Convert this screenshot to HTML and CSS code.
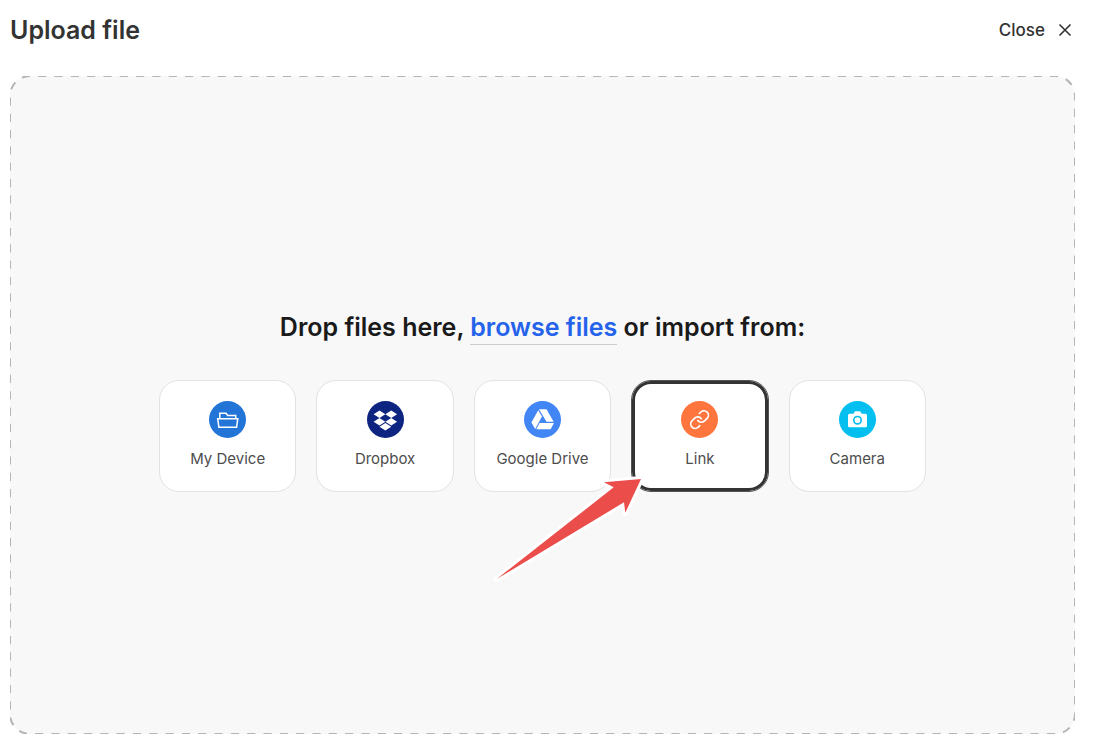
FILE: index.html
```html
<!DOCTYPE html>
<html lang="en">

<head>
    <meta charset="UTF-8">
    <meta name="viewport" content="width=device-width, initial-scale=1.0">
    <title>Upload file</title>
    <link rel="stylesheet" href="styles.css">
</head>

<body>
    <header class="header">
        <h1>Upload file</h1>
        <button type="button" class="close">
            Close
            <svg width="14" height="14" viewBox="0 0 14 14" aria-hidden="true">
                <path d="M1.5 1.5l11 11M12.5 1.5l-11 11" fill="none" stroke="#333" stroke-width="1.6" />
            </svg>
        </button>
    </header>

    <main class="dropzone">
        <svg class="dashes" aria-hidden="true">
            <rect width="100%" height="100%" rx="20" pathLength="3344" />
        </svg>

        <h2>Drop files here, <a href="#" class="browse">browse files</a> or import from:</h2>

        <ul class="sources">
            <li>
                <button type="button" class="source">
                    <svg class="icon" viewBox="0 0 37 37" aria-hidden="true">
                        <circle cx="18.5" cy="18.5" r="18.5" fill="#2275d7" />
                        <path d="M8.7 17.7h20.1l-1.2 8.6H9.9zM10.8 17.5v-5.2h6.2l1.7 2.2h8v3" fill="none" stroke="#fff" stroke-width="1.5" />
                    </svg>
                    My Device
                </button>
            </li>
            <li>
                <button type="button" class="source">
                    <svg class="icon" viewBox="0 0 37 37" aria-hidden="true">
                        <circle cx="18.5" cy="18.5" r="18.5" fill="#0d2481" />
                        <path transform="translate(6.6 7.7) scale(.98)" d="M6 1.8L0 5.6l6 3.8 6-3.8zM18 1.8l-6 3.8 6 3.8 6-3.8zM0 13.3l6 3.8 6-3.8-6-3.8zM18 9.5l-6 3.8 6 3.8 6-3.8zM6 18.4l6 3.8 6-3.8-6-3.8z" fill="#fff" />
                    </svg>
                    Dropbox
                </button>
            </li>
            <li>
                <button type="button" class="source">
                    <svg class="icon" viewBox="0 0 37 37" aria-hidden="true">
                        <circle cx="18.5" cy="18.5" r="18.5" fill="#4285f4" />
                        <path d="M15 8.3h7.5l7.2 12.4h-7.2zM14.2 9.3l3.8 6.3L11.2 28l-3.8-6.4zM15.6 22H30l-3.4 6.2H12.2z" fill="#fff" />
                    </svg>
                    Google Drive
                </button>
            </li>
            <li>
                <button type="button" class="source selected">
                    <svg class="icon" viewBox="0 0 37 37" aria-hidden="true">
                        <circle cx="18.5" cy="18.5" r="18.5" fill="#ff753e" />
                        <path transform="translate(7.9 7.9) scale(.89)" d="M10 13a5 5 0 0 0 7.54.54l3-3a5 5 0 0 0-7.07-7.07l-1.72 1.71M14 11a5 5 0 0 0-7.54-.54l-3 3a5 5 0 0 0 7.07 7.07l1.71-1.71" fill="none" stroke="#fff" stroke-width="1.9" stroke-linecap="round" />
                    </svg>
                    Link
                </button>
                <svg class="arrow" width="156" height="110" viewBox="0 0 156 110" aria-hidden="true">
                    <path d="M148 3L111 6.3l9.7 5L3.7 103 131 26.3l1.3 10.4z" />
                </svg>
            </li>
            <li>
                <button type="button" class="source">
                    <svg class="icon" viewBox="0 0 37 37" aria-hidden="true">
                        <circle cx="18.5" cy="18.5" r="18.5" fill="#03bfef" />
                        <path d="M10.5 12.8h4l1-1.9q.3-.6 1-.6h4.2q.7 0 1 .6l1 1.9h3.8q1.5 0 1.5 1.5v10.5q0 1.5-1.5 1.5h-16Q9 26.3 9 24.8V14.3q0-1.5 1.5-1.5z" fill="#fff" />
                        <circle cx="18.5" cy="19.2" r="3.7" fill="#fff" stroke="#03bfef" stroke-width="1.7" />
                    </svg>
                    Camera
                </button>
            </li>
        </ul>
    </main>
</body>

</html>
```
FILE: styles.css
```css
* {
    margin: 0;
    padding: 0;
    box-sizing: border-box;
}

body {
    display: flex;
    flex-direction: column;
    min-height: 100vh;
    padding: 14px 21px 8px 10px;
    background: #fff;
    color: #333;
    font-family: Inter, "Liberation Sans", sans-serif;
}

button {
    border: 0;
    background: none;
    color: inherit;
    font-family: inherit;
    cursor: pointer;
}

.header {
    display: flex;
    justify-content: space-between;
    align-items: center;
    height: 32px;
    margin-bottom: 30px;
}

.header h1,
.dropzone h2 {
    font-size: 25px;
    font-weight: 600;
    line-height: 32px;
}

.close {
    display: flex;
    align-items: center;
    gap: 13px;
    padding-right: 3px;
    font-size: 17px;
    font-weight: 500;
    line-height: 32px;
}

.dropzone {
    position: relative;
    flex: 1;
    display: flex;
    flex-direction: column;
    justify-content: center;
    align-items: center;
    padding: 20px 20px 27px;
    border-radius: 20px;
    background: #f8f8f8;
}

/* long dashes, the css dashed border is too short */
/* the outer half of the stroke is clipped by the svg */
.dashes {
    position: absolute;
    inset: 0;
    width: 100%;
    height: 100%;
    pointer-events: none;
}

.dashes rect {
    fill: none;
    stroke: #b5b5b5;
    stroke-width: 2;
    stroke-dasharray: 8;
    stroke-dashoffset: 8;
}

.dropzone h2 {
    margin-bottom: 37px;
    color: #1a1a1a;
    text-align: center;
}

.browse {
    padding-bottom: 2px;
    border-bottom: 1px solid #ccc;
    color: #2563eb;
    text-decoration: none;
}

.sources {
    display: grid;
    grid-template-columns: repeat(5, 1fr);
    gap: 20px;
    width: 100%;
    max-width: 767px;
    list-style: none;
}

.sources li {
    position: relative;
}

.source {
    display: flex;
    flex-direction: column;
    align-items: center;
    gap: 10px;
    width: 100%;
    padding: 20px 0 22px;
    border: 1px solid #e2e2e2;
    border-radius: 20px;
    background: #fff;
    color: #4d4d4d;
    font-size: 15px;
    line-height: 21px;
}

.source.selected {
    border-color: #555;
    box-shadow: inset 0 0 0 3px #333;
}

.icon {
    width: 37px;
    height: 37px;
}

.arrow {
    position: absolute;
    top: 96px;
    left: -138px;
    z-index: 1;
    pointer-events: none;
}

.arrow path {
    fill: #eb4d4b;
    stroke: #fff;
    stroke-width: 6;
    stroke-linejoin: round;
    paint-order: stroke;
}
```
